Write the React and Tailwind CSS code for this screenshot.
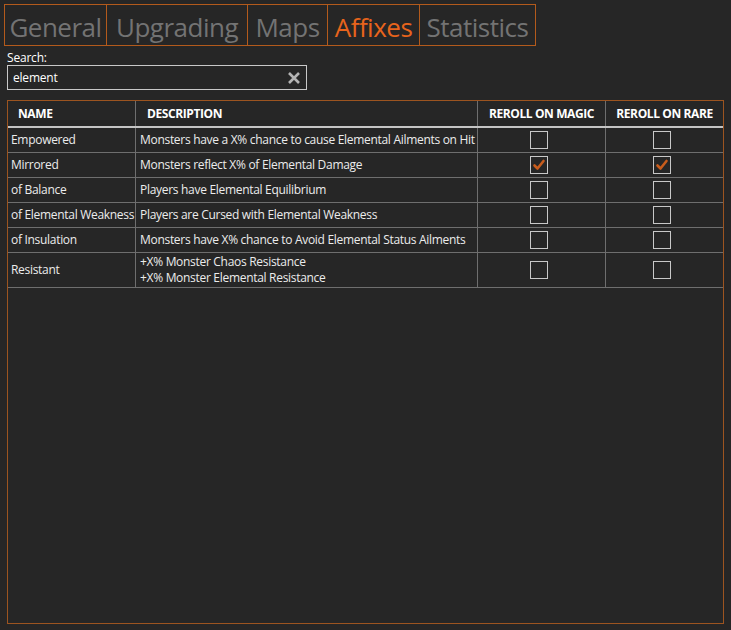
import React from "react";

const tabs = [
  { label: "General", w: "w-[103px]" },
  { label: "Upgrading", w: "w-[141px]" },
  { label: "Maps", w: "w-[80px]" },
  { label: "Affixes", w: "w-[92px]", active: true },
  { label: "Statistics", w: "w-[116px]" },
];

const affixes = [
  { name: "Empowered", desc: ["Monsters have a X% chance to cause Elemental Ailments on Hit"], magic: false, rare: false },
  { name: "Mirrored", desc: ["Monsters reflect X% of Elemental Damage"], magic: true, rare: true },
  { name: "of Balance", desc: ["Players have Elemental Equilibrium"], magic: false, rare: false },
  { name: "of Elemental Weakness", desc: ["Players are Cursed with Elemental Weakness"], magic: false, rare: false },
  { name: "of Insulation", desc: ["Monsters have X% chance to Avoid Elemental Status Ailments"], magic: false, rare: false },
  { name: "Resistant", desc: ["+X% Monster Chaos Resistance", "+X% Monster Elemental Resistance"], magic: false, rare: false },
];

const cols = "grid grid-cols-[128px_342px_128px_117px]";

const Check = ({ checked }) => (
  <div className="w-[18px] h-[18px] border border-[#c8c8c8] flex items-center justify-center">
    {checked && (
      <svg width="14" height="14" viewBox="0 0 14 14">
        <path d="M2.5 7.5 L5.5 10.5 L11.5 3" fill="none" stroke="#c85c1c" strokeWidth="2.6" strokeLinecap="round" strokeLinejoin="round" />
      </svg>
    )}
  </div>
);

const App = () => {
  return (
    <div className="w-[731px] h-[630px] bg-[#262626] font-['Open_Sans',sans-serif] overflow-hidden">
      {/* tabs */}
      <div className="flex pl-[4px] pt-[4px]">
        {tabs.map((t, i) => (
          <div
            key={t.label}
            className={`${t.w} h-[42px] border-y border-r border-[#b35a1c] ${i === 0 ? "border-l" : ""} flex items-center justify-center pt-[3px] text-[26px] leading-none tracking-[-0.5px] ${t.active ? "text-[#e8641c]" : "text-[#737373]"}`}
          >
            {t.label}
          </div>
        ))}
      </div>

      {/* search */}
      <div className="pl-[7px] pt-[4px] text-[12px] leading-[15px] text-white tracking-[-0.2px]">Search:</div>
      <div className="ml-[7px] w-[300px] h-[25px] border border-[#c8c8c8] flex items-center justify-between pl-[5px] pr-[5px]">
        <span className="text-[12px] text-white tracking-[-0.2px]">element</span>
        <svg width="14" height="14" viewBox="0 0 14 14">
          <path d="M2 2 L12 12 M12 2 L2 12" stroke="#b4b4b4" strokeWidth="2.6" />
        </svg>
      </div>

      {/* table panel */}
      <div className="mx-[7px] mt-[10px] h-[524px] border border-[#9c5420]">
        <div className={`${cols} h-[27px] border-b-2 border-[#c4c4c4] text-[12px] font-bold text-white tracking-[-0.4px]`}>
          <div className="border-r border-[#6e6e6e] flex items-center pl-[10px]">NAME</div>
          <div className="border-r border-[#6e6e6e] flex items-center pl-[11px]">DESCRIPTION</div>
          <div className="border-r border-[#6e6e6e] flex items-center justify-center">REROLL ON MAGIC</div>
          <div className="flex items-center justify-center">REROLL ON RARE</div>
        </div>
        {affixes.map((a) => (
          <div
            key={a.name}
            className={`${cols} ${a.desc.length > 1 ? "h-[35px]" : "h-[25px]"} border-b border-[#6e6e6e] text-[12px] text-[#ececec] tracking-[-0.3px]`}
          >
            <div className="border-r border-[#6e6e6e] flex items-center pl-[3px] whitespace-nowrap">{a.name}</div>
            <div className="border-r border-[#6e6e6e] flex flex-col justify-center pl-[4px] leading-[16px] whitespace-nowrap">
              {a.desc.map((d) => (
                <span key={d}>{d}</span>
              ))}
            </div>
            <div className="border-r border-[#6e6e6e] flex items-center justify-center pr-[5px]">
              <Check checked={a.magic} />
            </div>
            <div className="flex items-center justify-center pr-[5px]">
              <Check checked={a.rare} />
            </div>
          </div>
        ))}
      </div>
    </div>
  );
};

export default App;
